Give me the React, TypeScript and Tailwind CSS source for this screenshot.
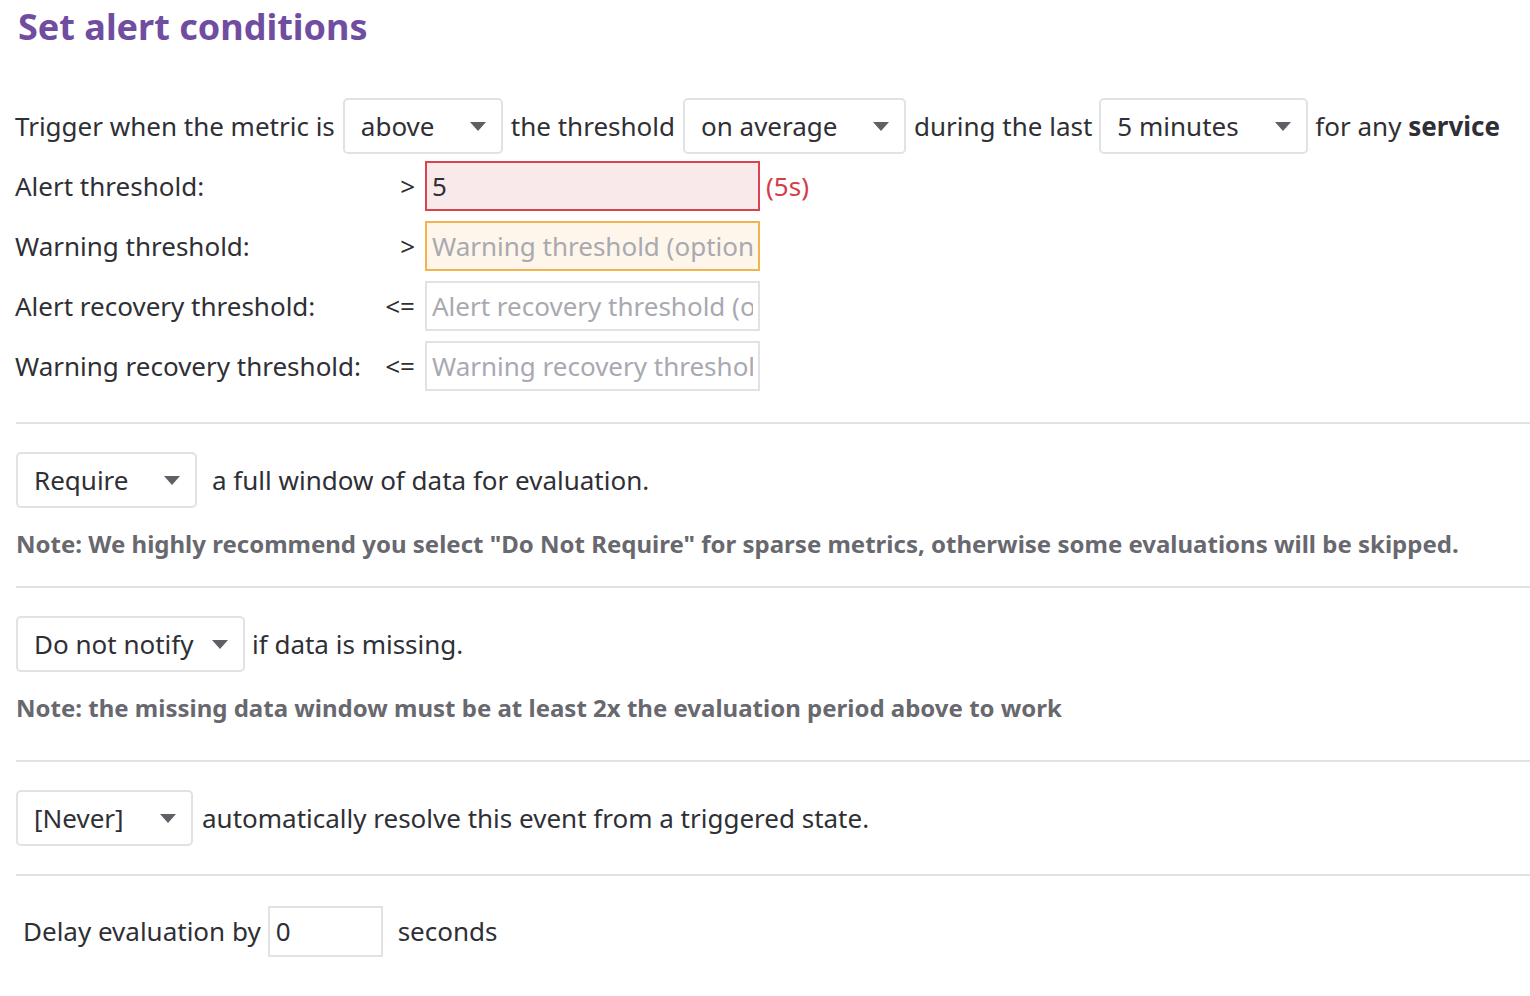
const font = { fontFamily: '"Noto Sans", "Open Sans", sans-serif' };

// Select con triangulito a la derecha
const Select = ({ value, width }: { value: string; width: string }) => {
  return (
    <div
      className={`flex h-[56px] ${width} shrink-0 items-center justify-between rounded-[5px] border-2 border-[#e2e2e6] bg-white pl-[16px] pr-[15px]`}
    >
      <span>{value}</span>
      <svg width="16" height="9" viewBox="0 0 16 9" className="shrink-0">
        <path d="M0 0 L16 0 L8 9 Z" fill="#5f5f66" />
      </svg>
    </div>
  );
};

interface ThresholdRowProps {
  label: string;
  op: string;
  placeholder?: string;
  value?: string;
  tone?: 'alert' | 'warning' | 'plain';
  extra?: string;
}

const ThresholdRow = ({ label, op, placeholder, value, tone = 'plain', extra }: ThresholdRowProps) => {
  const box =
    tone === 'alert'
      ? 'border-[#d9434f] bg-[#f9e9ea]'
      : tone === 'warning'
        ? 'border-[#f2b44e] bg-[#fef6ea]'
        : 'border-[#e2e2e6] bg-white';
  return (
    <div className="flex h-[50px] items-center">
      <span className="w-[360px] shrink-0">{label}</span>
      <span className="w-[40px] shrink-0 text-right">{op}</span>
      <input
        readOnly
        value={value ?? ''}
        placeholder={placeholder}
        className={`ml-[10px] h-[50px] w-[335px] shrink-0 border-2 pl-[5px] pr-[5px] text-[#2f2f36] outline-none placeholder:text-[#a9a9b1] ${box}`}
      />
      {extra && <span className="ml-[6px] text-[#d33d49]">{extra}</span>}
    </div>
  );
};

const Divider = () => <div className="h-[2px] bg-[#e2e2e6]" />;

export default function App() {
  return (
    <div className="min-h-screen bg-white pl-[15px] text-[26px] text-[#2f2f36]" style={font}>
      <h1 className="pl-[3px] pt-[1px] text-[36px] font-bold leading-[52px] text-[#704da0]">Set alert conditions</h1>

      <div className="mt-[45px] flex items-center whitespace-nowrap">
        <span>Trigger when the metric is</span>
        <div className="ml-[8px]">
          <Select value="above" width="w-[160px]" />
        </div>
        <span className="ml-[8px]">the threshold</span>
        <div className="ml-[8px]">
          <Select value="on average" width="w-[223px]" />
        </div>
        <span className="ml-[8px]">during the last</span>
        <div className="ml-[7px]">
          <Select value="5 minutes" width="w-[209px]" />
        </div>
        <span className="ml-[7px]">
          for any <b>service</b>
        </span>
      </div>

      <div className="mt-[7px] flex flex-col gap-[10px]">
        <ThresholdRow label="Alert threshold:" op=">" value="5" tone="alert" extra="(5s)" />
        <ThresholdRow label="Warning threshold:" op=">" placeholder="Warning threshold (optional)" tone="warning" />
        <ThresholdRow label="Alert recovery threshold:" op="<=" placeholder="Alert recovery threshold (optional)" />
        <ThresholdRow label="Warning recovery threshold:" op="<=" placeholder="Warning recovery threshold (optional)" />
      </div>

      <div className="mt-[31px] ml-[1px]">
        <Divider />
      </div>

      <div className="mt-[28px] flex items-center">
        <div className="ml-[1px]">
          <Select value="Require" width="w-[181px]" />
        </div>
        <span className="ml-[15px]">a full window of data for evaluation.</span>
      </div>
      <p className="mt-[18px] ml-[1px] text-[24px] font-bold leading-[36px] text-[#68686f]">
        Note: We highly recommend you select "Do Not Require" for sparse metrics, otherwise some evaluations will be skipped.
      </p>

      <div className="mt-[24px] ml-[1px]">
        <Divider />
      </div>

      <div className="mt-[28px] flex items-center">
        <div className="ml-[1px]">
          <Select value="Do not notify" width="w-[229px]" />
        </div>
        <span className="ml-[7px]">if data is missing.</span>
      </div>
      <p className="mt-[18px] ml-[1px] text-[24px] font-bold leading-[36px] text-[#68686f]">
        Note: the missing data window must be at least 2x the evaluation period above to work
      </p>

      <div className="mt-[34px] ml-[1px]">
        <Divider />
      </div>

      <div className="mt-[28px] flex items-center">
        <div className="ml-[1px]">
          <Select value="[Never]" width="w-[177px]" />
        </div>
        <span className="ml-[9px]">automatically resolve this event from a triggered state.</span>
      </div>

      <div className="mt-[28px] ml-[1px]">
        <Divider />
      </div>

      <div className="mt-[30px] flex items-center pl-[8px]">
        <span>Delay evaluation by</span>
        <div className="ml-[7px] flex h-[51px] w-[115px] items-center border-2 border-[#e2e2e6] pl-[6px]">0</div>
        <span className="ml-[15px]">seconds</span>
      </div>
    </div>
  );
}
